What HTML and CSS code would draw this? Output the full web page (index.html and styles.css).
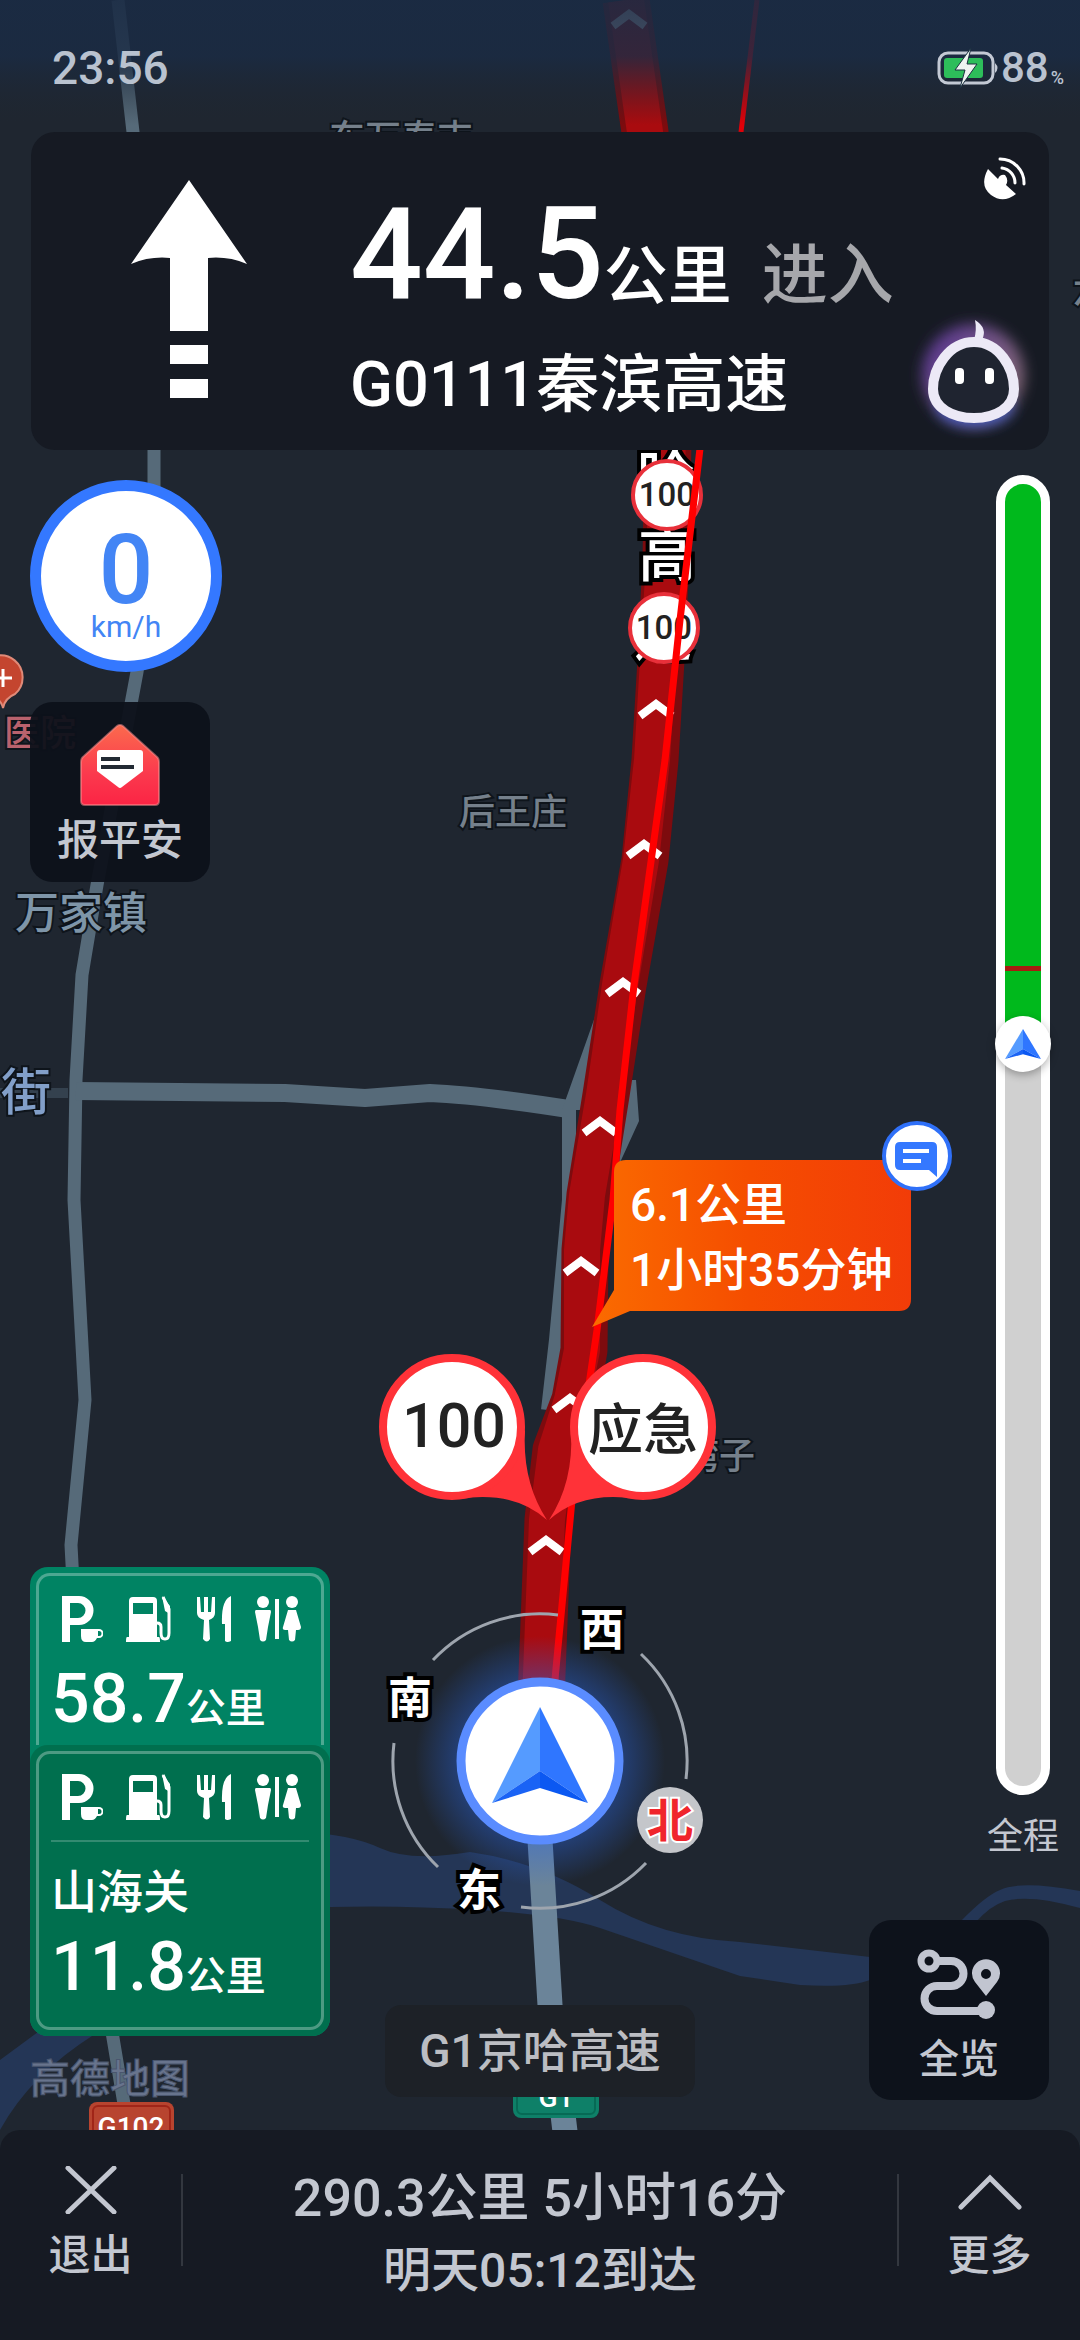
FILE: index.html
```html
<!DOCTYPE html>
<html lang="zh-CN">
<head>
<meta charset="utf-8">
<meta name="viewport" content="width=device-width, initial-scale=1">
<title>导航</title>
<link rel="stylesheet" href="styles.css">
</head>
<body>
<svg class="defs" width="0" height="0" aria-hidden="true">
  <defs>
    <symbol id="i-parking" viewBox="0 0 42 46">
      <path d="M1 0h17a14 14 0 0 1 0 29H9v17H1zM9 7v15h8a7.500 7.500 0 0 0 0-15z" fill-rule="evenodd"/>
      <path d="M20 33h18a4.500 4.500 0 0 1 0 9h-2q-2 4-5 4h-6q-5 0-5-6zM37 35v5h1a2.500 2.500 0 0 0 0-5z" fill-rule="evenodd"/>
    </symbol>
    <symbol id="i-fuel" viewBox="0 0 46 46">
      <path d="M3 5q0-4 4-4h20q4 0 4 4v36h2q1 0 1 5H0q0-5 1-5h2zM7 7v11h20V7z" fill-rule="evenodd"/>
      <path d="M37 1l6 12v24q0 6-4 6t-4-6v-6q0-4-4-4" fill="none" stroke="currentColor" stroke-width="3"/>
      <path d="M36 0l8 10v8l-5-3z"/>
    </symbol>
    <symbol id="i-food" viewBox="0 0 36 46">
      <path d="M1 1h3l1 15h3V1h4v15h3l1-15h3v16q0 5-6 7l1 19q-3 5-7 0l1-19q-7-2-7-7zM35 0v45q-4 2-6 0V28h-3q-1-24 9-28z"/>
    </symbol>
    <symbol id="i-toilet" viewBox="0 0 46 46">
      <circle cx="8" cy="6" r="6"/><circle cx="37" cy="6" r="6"/>
      <path d="M1 14h14q1 0 1 2l-3 15-2 13q-3 3-6 0L3 31 0 16q0-2 1-2zM20 3h4v40h-4zM33 14h8l5 17q0 3-3 3h-2l-1 10q-3 3-6 0l-1-10h-3q-3 0-2-3z"/>
    </symbol>
    <symbol id="i-cursor" viewBox="0 0 96 96">
      <path d="M48 0v64L0 96z" fill="#559bff"/>
      <path d="M48 0v64l48 32z" fill="#2f76ff"/>
      <path d="M48 64v17L0 96z" fill="#1a63f5"/><path d="M48 64v17l48 15z" fill="#0b58f2"/>
    </symbol>
  </defs>
</svg>
<main class="screen">
  <svg class="map" viewBox="0 0 1080 2340" preserveAspectRatio="xMidYMin slice" role="img" aria-label="导航地图">
    <defs>
      <linearGradient id="g-sky" x1="0" y1="0" x2="0" y2="1">
        <stop offset="0" stop-color="#1a2b44" stop-opacity=".9"/>
        <stop offset=".45" stop-color="#1a2b44" stop-opacity=".82"/>
        <stop offset="1" stop-color="#1f2630" stop-opacity="0"/>
      </linearGradient>
      <linearGradient id="g-bubble" x1="0" y1="0" x2="1" y2="0">
        <stop offset="0" stop-color="#fa6b00"/><stop offset=".5" stop-color="#f54d00"/><stop offset="1" stop-color="#f23c08"/>
      </linearGradient>
      <radialGradient id="g-glow">
        <stop offset=".6" stop-color="#2a66e0" stop-opacity=".45"/><stop offset="1" stop-color="#2a66e0" stop-opacity="0"/>
      </radialGradient>
      <path id="chevron" d="M-16 17L0 5l16 12" fill="none" stroke="#fff" stroke-width="8"/>
    </defs>

    <!-- river -->
    <g fill="#243656">
      <path d="M0 2060L95 1990V2034Q30 2075 0 2130z"/>
      <path d="M300 1832Q350 1834 380 1848T470 1852Q540 1862 600 1900T740 1942L870 1957V1980Q850 1988 800 1985L740 1976L600 1928Q560 1915 480 1910T330 1907z"/>
      <path d="M960 1922Q985 1896 1000 1890Q1020 1880 1080 1891V1908Q1030 1894 1005 1901Q990 1906 976 1922z"/>
    </g>

    <!-- side roads -->
    <g fill="none" stroke="#566a79" stroke-linejoin="round">
      <path stroke-width="13" d="M118 0L133 132L154 440L154 560L137 672L97 885L82 975L76 1080L74 1200L85 1400L71 1545L90 1900L125 2110"/>
      <path stroke-width="18" d="M76 1091L285 1093L365 1098L430 1093Q480 1095 575 1110"/>
      <path stroke-width="10" stroke="#34414e" d="M0 1093H68"/>
      <path stroke-width="14" d="M569 1104V1200L556 1340L548 1410"/>
      <path stroke="none" fill="#566a79" d="M596 1014V1110H562zM636 1080L639 1121L612 1180V1080z"/>
      <path stroke-width="25" stroke="#6b8499" d="M540 1840L550 2005L566 2140"/>
    </g>

    <!-- place names -->
    <g class="place">
      <text x="329" y="151" font-size="36">东万泰吉</text>
      <text x="1073" y="303" font-size="36">六</text>
      <text x="459" y="825" font-size="36">后王庄</text>
      <text x="683" y="1469" font-size="36">湾子</text>
      <text class="town" x="15" y="929" font-size="44">万家镇</text>
      <text class="street" x="1" y="1110" font-size="50">街</text>
      <text class="hospital" x="4" y="746" font-size="36">医院</text>
    </g>
    <path d="M3 708q-2-9-10-10a22 22 0 1 1 22-4q-10 4-12 14z" fill="#c4452f" stroke="#e08a78" stroke-width="2"/>
    <path d="M-6 678h18M3 669v18" stroke="#fff" stroke-width="3"/>

    <!-- route -->
    <g fill="none" stroke-linejoin="round">
      <path stroke="#7d0b0e" stroke-width="47" d="M626 0L645 132L668 440L666 560L661 660L655 760L645 860L623 985L606 1095L590 1195L585 1250L584 1350L575 1400L556 1450L548 1520L541 1700"/>
      <path stroke="#a90b0f" stroke-width="36" d="M626 0L645 132L668 440L664 560L658 660L652 760L641 860L620 985L604 1095L587 1195L582 1250L582 1350L572 1400L556 1450L547 1520L540 1700"/>
    </g>
    <use href="#chevron" x="629" y="9" opacity=".9"/>
    <use href="#chevron" x="656" y="699"/><use href="#chevron" x="644" y="839"/>
    <use href="#chevron" x="623" y="977"/><use href="#chevron" x="600" y="1116"/>
    <use href="#chevron" x="581" y="1256"/><use href="#chevron" x="570" y="1393"/>
    <use href="#chevron" x="546" y="1535"/>
    <g class="road-name">
      <text x="666" y="497">哈</text><text x="667" y="576">高</text><text x="663" y="656">速</text>
    </g>
    <g class="limit-small">
      <circle cx="667" cy="495" r="34"/><text x="667" y="506">100</text>
      <circle cx="664" cy="628" r="34"/><text x="664" y="639">100</text>
    </g>
    <path d="M757 0L741 132" stroke="#e00008" stroke-width="5"/>
    <path d="M701 440L680 620L665 760L634 985L620 1110L613 1200L597 1330L572 1500L553 1700" fill="none" stroke="#f00" stroke-width="7"/>
    <rect width="1080" height="125" fill="url(#g-sky)"/>

    <!-- warning pins -->
    <g class="pin">
      <path d="M525 1430Q522 1482 547 1520Q514 1490 458 1499z"/>
      <circle cx="452" cy="1427" r="69"/><text x="454" y="1447" font-size="61">100</text>
      <path d="M571 1430Q574 1482 549 1520Q582 1490 638 1499z"/>
      <circle cx="643" cy="1427" r="69"/><text x="643" y="1449" font-size="55">应急</text>
    </g>

    <!-- jam bubble -->
    <path d="M626 1160H899q12 0 12 12V1299q0 12-12 12H630L592 1327L614 1290V1172q0-12 12-12z" fill="url(#g-bubble)"/>
    <g class="bubble-text"><text x="630" y="1221">6.1公里</text><text x="630" y="1286">1小时35分钟</text></g>
    <circle cx="917" cy="1156" r="33" fill="#fff" stroke="#2f70f8" stroke-width="4"/>
    <path d="M900 1142h32q5 0 5 5v30l-8-7h-29q-5 0-5-5v-18q0-5 5-5z" fill="#3478ff"/>
    <path d="M903 1151h26M903 1161h18" stroke="#fff" stroke-width="4"/>

    <!-- compass and vehicle -->
    <circle cx="540" cy="1761" r="125" fill="url(#g-glow)"/>
    <g fill="none" stroke="#9ea5ae" stroke-width="3">
      <path d="M433 1660A147 147 0 0 1 558 1615M641 1654A147 147 0 0 1 686 1779M646 1863A147 147 0 0 1 521 1907M438 1867A147 147 0 0 1 394 1743"/>
    </g>
    <g class="compass">
      <text x="602" y="1646">西</text><text x="410" y="1714">南</text><text x="479" y="1906">东</text>
      <circle cx="670" cy="1820" r="33" fill="#c4c6ca"/><text class="north" x="670" y="1837">北</text>
    </g>
    <circle cx="540" cy="1761" r="79" fill="#fff" stroke="#5a8cff" stroke-width="9"/>
    <use href="#i-cursor" x="492" y="1707" width="96" height="96"/>

    <!-- highway shields -->
    <g class="shield">
      <rect x="89" y="2102" width="85" height="50" rx="8" fill="#b8442f"/>
      <rect x="93" y="2106" width="77" height="42" rx="5" fill="none" stroke="#a02518" stroke-width="2"/>
      <text x="131" y="2137">G102</text>
      <rect x="513" y="2072" width="86" height="46" rx="8" fill="#0e8068"/>
      <rect x="517" y="2076" width="78" height="38" rx="5" fill="none" stroke="#066a55" stroke-width="2"/>
      <text x="556" y="2107">G1</text>
    </g>
  </svg>

  <div class="hud">
    <header class="status">
      <time>23:56</time>
      <div class="battery">
        <svg width="62" height="44" viewBox="0 0 62 44" role="img" aria-label="充电中">
          <rect x="2" y="7" width="54" height="30" rx="9" fill="none" stroke="#c3c9d4" stroke-width="3"/>
          <path d="M58 17q5 5 0 10z" fill="#c3c9d4"/>
          <rect x="7" y="12" width="39" height="20" rx="3" fill="#2dbe5a"/>
          <path d="M34 2L18 24h10l-5 18L40 18H30z" fill="#eef4f0" stroke="#1b3040" stroke-width="1"/>
        </svg>
        <span>88</span><small>%</small>
      </div>
    </header>

    <section class="guide">
      <svg class="turn" width="118" height="220" viewBox="0 0 118 220" role="img" aria-label="直行">
        <path d="M59 0l58 84q-19-8-39-6v73H40V78q-20-2-39 6zM40 165h38v19H40zM40 199h38v19H40z" fill="#fff"/>
      </svg>
      <div class="guide-text">
        <p class="distance"><strong>44.5</strong><b>公里</b><span>进入</span></p>
        <p class="next-road">G0111秦滨高速</p>
      </div>
      <div class="guide-side">
        <svg width="46" height="46" viewBox="0 0 46 46" role="img" aria-label="卫星信号">
          <path d="M7 13L17 23Q19 18 24 19Q28 24 25 29L35 38Q22 48 10 39T7 13z" fill="#fff"/>
          <path d="M21 12A15 15 0 0 1 34 27M19 3A24 24 0 0 1 43 28" fill="none" stroke="#fff" stroke-width="3" stroke-linecap="round"/>
        </svg>
        <button class="assistant" aria-label="语音助手">
          <svg width="134" height="134" viewBox="0 0 134 134">
            <defs>
              <linearGradient id="g-aura" x1=".1" y1=".2" x2=".9" y2=".7"><stop offset="0" stop-color="#5d3a90"/><stop offset="1" stop-color="#85697a"/></linearGradient>
              <filter id="f-soft" x="-30%" y="-30%" width="160%" height="160%"><feGaussianBlur stdDeviation="7"/></filter>
            </defs>
            <circle cx="66" cy="67" r="51" fill="url(#g-aura)" filter="url(#f-soft)"/>
            <ellipse cx="68" cy="98" rx="38" ry="20" fill="#4159c0" filter="url(#f-soft)"/>
            <path d="M67 34C92 34 107 60 107 81C107 100 88 110 67 110S26 100 26 81C26 60 42 34 67 34z" fill="#1f2430" stroke="#ece9f6" stroke-width="10"/>
            <path d="M68 12q13 8 7 20h-8q3-10 1-20z" fill="#ece9f6"/>
            <rect x="48" y="60" width="9" height="16" rx="4" fill="#fff"/><rect x="78" y="60" width="9" height="16" rx="4" fill="#fff"/>
          </svg>
        </button>
      </div>
    </section>

    <div class="overlay">
      <div class="left">
        <div class="speed"><strong>0</strong><span>km/h</span></div>
        <button class="tile">
          <svg width="80" height="84" viewBox="0 0 80 84">
            <defs><linearGradient id="g-mail" x1="0" y1="0" x2="0" y2="1"><stop offset="0" stop-color="#fb6a4d"/><stop offset=".6" stop-color="#fb3a4e"/><stop offset="1" stop-color="#fb2444"/></linearGradient></defs>
            <path class="mail" d="M37 2q3-2 6 0l33 30q3 2 3 6v39q0 4-4 4H5q-4 0-4-4V38q0-4 3-6z" fill="url(#g-mail)"/>
            <path d="M17 29q0-3 3-3h40q3 0 3 3v18L42 63q-2 2-4 0L17 47z" fill="#fff"/>
            <path d="M21 35h19M21 43h33" stroke="#222a33" stroke-width="4"/>
          </svg>
          <span>报平安</span>
        </button>
        <div class="services">
          <section class="service">
            <div class="service-body">
              <div class="facilities">
                <svg width="42" height="46"><use href="#i-parking"/></svg><svg width="46" height="46"><use href="#i-fuel"/></svg><svg width="36" height="46"><use href="#i-food"/></svg><svg width="46" height="46"><use href="#i-toilet"/></svg>
              </div>
              <p class="away"><strong>58.7</strong>公里</p>
            </div>
          </section>
          <section class="service near">
            <div class="service-body">
              <div class="facilities">
                <svg width="42" height="46"><use href="#i-parking"/></svg><svg width="46" height="46"><use href="#i-fuel"/></svg><svg width="36" height="46"><use href="#i-food"/></svg><svg width="46" height="46"><use href="#i-toilet"/></svg>
              </div>
              <h2>山海关</h2>
              <p class="away"><strong>11.8</strong>公里</p>
            </div>
          </section>
        </div>
        <p class="brand">高德地图</p>
      </div>

      <p class="current-road">G1京哈高速</p>

      <div class="right">
        <div class="trip">
          <div class="track" role="img" aria-label="全程路况">
            <span class="marker"><svg width="36" height="30" viewBox="0 0 96 96" preserveAspectRatio="none"><use href="#i-cursor"/></svg></span>
          </div>
          <span>全程</span>
        </div>
        <button class="tile overview">
          <svg width="84" height="72" viewBox="0 0 84 72" fill="none" stroke="#c1c5d0" stroke-width="8">
            <circle cx="12" cy="12" r="8" stroke-width="7"/>
            <path d="M20 12h14a12 12 0 0 1 0 25H20a12 12 0 0 0 0 25h46"/>
            <circle cx="69" cy="61" r="9" fill="#c1c5d0" stroke="none"/>
            <path d="M69 47L58 33a14 14 0 1 1 22 0zM69 20a5 5 0 1 0 0 10a5 5 0 1 0 0-10z" fill="#c1c5d0" fill-rule="evenodd" stroke="none"/>
          </svg>
          <span>全览</span>
        </button>
      </div>
    </div>

    <footer class="bar">
      <button class="bar-button">
        <svg width="64" height="48" viewBox="0 0 64 48"><path d="M9 2l46 44M55 2L9 46"/></svg>
        <span>退出</span>
      </button>
      <div class="summary">
        <p class="remain">290.3公里 5小时16分</p>
        <p class="arrive">明天05:12到达</p>
      </div>
      <button class="bar-button">
        <svg width="64" height="48" viewBox="0 0 64 48"><path d="M3 41l29-29 29 29"/></svg>
        <span>更多</span>
      </button>
    </footer>
  </div>
</main>
</body>
</html>
```
FILE: styles.css
```css
* { box-sizing: border-box; }
body, p, h2 { margin: 0; }
body {
  background: #1f2630;
  color: #c3c7d0;
  font-family: Roboto, "Noto Sans CJK SC", sans-serif;
  font-weight: 500;
}
button {
  padding: 0;
  border: 0;
  background: none;
  color: inherit;
  font: inherit;
}
svg { display: block; }
.defs { position: absolute; }

.screen { position: relative; min-height: 100vh; overflow: hidden; }
.map { position: absolute; inset: 0; width: 100%; height: 100%; }
.hud { position: relative; display: flex; flex-direction: column; min-height: 100vh; }

/* map lettering */
.place text { fill: #75808b; stroke: #0e141b; stroke-width: 4px; paint-order: stroke; font-weight: 500; }
.place .town { fill: #7e95a8; }
.place .street { fill: #829fc9; }
.place .hospital { fill: #b9626d; }
.road-name text { fill: #fff; stroke: #000; stroke-width: 8px; paint-order: stroke; font-size: 58px; text-anchor: middle; }
.limit-small circle { fill: #fff; stroke: #e8303a; stroke-width: 4px; }
.limit-small text { fill: #222; font-size: 33px; text-anchor: middle; }
.pin path { fill: #ff3238; }
.pin circle { fill: #fff; stroke: #ff3238; stroke-width: 8px; }
.pin text { fill: #222; text-anchor: middle; }
.bubble-text text { fill: #fff; font-size: 46px; }
.compass text { fill: #fff; stroke: #000; stroke-width: 8px; paint-order: stroke; font-size: 44px; font-weight: 700; text-anchor: middle; }
.compass .north { fill: #f0252c; stroke: #fff; stroke-width: 4px; font-size: 46px; }
.shield text { fill: #fff; font-size: 28px; text-anchor: middle; }

/* status bar */
.status { display: flex; justify-content: space-between; align-items: center; height: 132px; padding: 4px 16px 0 52px; }
.status time { font-size: 46px; color: #b9c2cf; }
.battery { display: flex; align-items: center; gap: 2px; color: #b9c2cf; font-size: 42px; line-height: 44px; }
.battery small { align-self: flex-end; font-size: 18px; line-height: 24px; }

/* guidance card */
.guide { display: flex; margin: 0 31px; padding: 24px 18px 0 99px; height: 318px; background: #161a23; border-radius: 24px; }
.turn { margin-top: 24px; }
.guide-text { flex: 1; padding: 30px 0 0 102px; color: #fff; white-space: nowrap; }
.distance { display: flex; align-items: baseline; line-height: 136px; }
.distance strong { font-size: 128px; font-weight: 500; }
.distance b { font-size: 64px; font-weight: 500; }
.distance span { margin-left: 30px; font-size: 66px; color: #a6a7ab; }
.next-road { font-size: 63px; line-height: 80px; }
.guide-side { display: flex; flex-direction: column; justify-content: space-between; align-items: flex-end; width: 134px; }
.guide-side > svg { margin-right: 4px; }
.assistant { margin: 0 -10px 8px 0; }

/* overlay over the map */
.overlay { flex: 1; display: flex; justify-content: space-between; padding: 25px 21px 30px 30px; }
.left { display: flex; flex-direction: column; align-items: flex-start; width: 300px; padding-top: 5px; }
.speed { display: flex; flex-direction: column; align-items: center; width: 192px; height: 192px; padding-top: 34px; border: 11px solid #3478ff; border-radius: 50%; background: #fff; color: #4385f5; }
.speed strong { font-size: 96px; font-weight: 500; line-height: 90px; }
.speed span { font-size: 30px; font-weight: 400; line-height: 24px; }
.tile { display: flex; flex-direction: column; align-items: center; justify-content: center; gap: 6px; width: 180px; height: 180px; padding-top: 8px; border-radius: 22px; background: rgba(13, 17, 26, .95); font-size: 42px; line-height: 54px; }
.left .tile { margin-top: 30px; }
.mail { stroke: rgba(255, 150, 150, .5); stroke-width: 2px; }
.services { width: 100%; margin-top: auto; border-radius: 18px; overflow: hidden; background: #008363; color: #fff; }
.service { padding: 6px 6px 0; }
.service-body { height: 172px; padding: 20px 12px 0; border: 3px solid rgba(255, 255, 255, .3); border-bottom: 0; border-radius: 14px 14px 0 0; }
.near { padding: 6px; background: #006f4e; border-radius: 18px 18px 0 0; }
.near .service-body { height: auto; padding-bottom: 12px; border-bottom: 3px solid rgba(255, 255, 255, .3); border-radius: 14px; }
.facilities { display: flex; justify-content: space-between; padding: 0 8px 0 10px; fill: currentColor; }
.near .facilities { padding-bottom: 20px; border-bottom: 2px solid rgba(255, 255, 255, .2); }
.services h2 { margin-top: 18px; font-size: 46px; font-weight: 500; line-height: 64px; }
.away { margin-top: 19px; font-size: 40px; line-height: 76px; white-space: nowrap; }
.near .away { margin-top: 5px; }
.away strong { font-size: 68px; font-weight: 500; }
.brand { margin-top: 24px; font-size: 40px; line-height: 40px; color: #68748d; -webkit-text-stroke: 1px #4a566e; }

.current-road { align-self: flex-end; margin: 0 0 3px; padding: 16px 34px; border-radius: 16px; background: #1d2127; color: #bbbdc2; font-size: 46px; line-height: 60px; white-space: nowrap; }

.right { display: flex; flex-direction: column; align-items: flex-end; width: 309px; }
.trip { flex: 1; display: flex; flex-direction: column; align-items: center; font-size: 36px; line-height: 40px; font-weight: 400; gap: 22px; }
.track { position: relative; flex: 1; width: 54px; border: 9px solid #fff; border-radius: 27px; background: linear-gradient(#00b91c 37%, #a81c10 37% 37.4%, #00b91c 37.4% 43%, #d0d0d0 43%); }
.marker { position: absolute; left: 50%; top: 43%; width: 56px; height: 56px; margin: -28px; display: grid; place-items: center; border-radius: 50%; background: #fff; box-shadow: 0 3px 8px rgba(0, 0, 0, .3); }
.overview { margin: 63px 10px 0 0; padding-top: 16px; gap: 12px; font-size: 40px; }

/* bottom bar */
.bar { display: flex; align-items: flex-start; height: 210px; padding-top: 36px; background: #161a23; border-radius: 20px 20px 0 0; }
.bar-button { display: flex; flex-direction: column; align-items: center; gap: 12px; width: 181px; font-size: 42px; line-height: 60px; }
.bar-button path { fill: none; stroke: #c3c7d0; stroke-width: 5px; stroke-linecap: round; }
.summary { flex: 1; margin-top: 8px; border: solid #33373f; border-width: 0 2px; height: 92px; display: flex; flex-direction: column; align-items: center; white-space: nowrap; }
.remain { margin-top: -11px; font-size: 52px; line-height: 72px; }
.arrive { font-size: 48px; line-height: 72px; }
```
